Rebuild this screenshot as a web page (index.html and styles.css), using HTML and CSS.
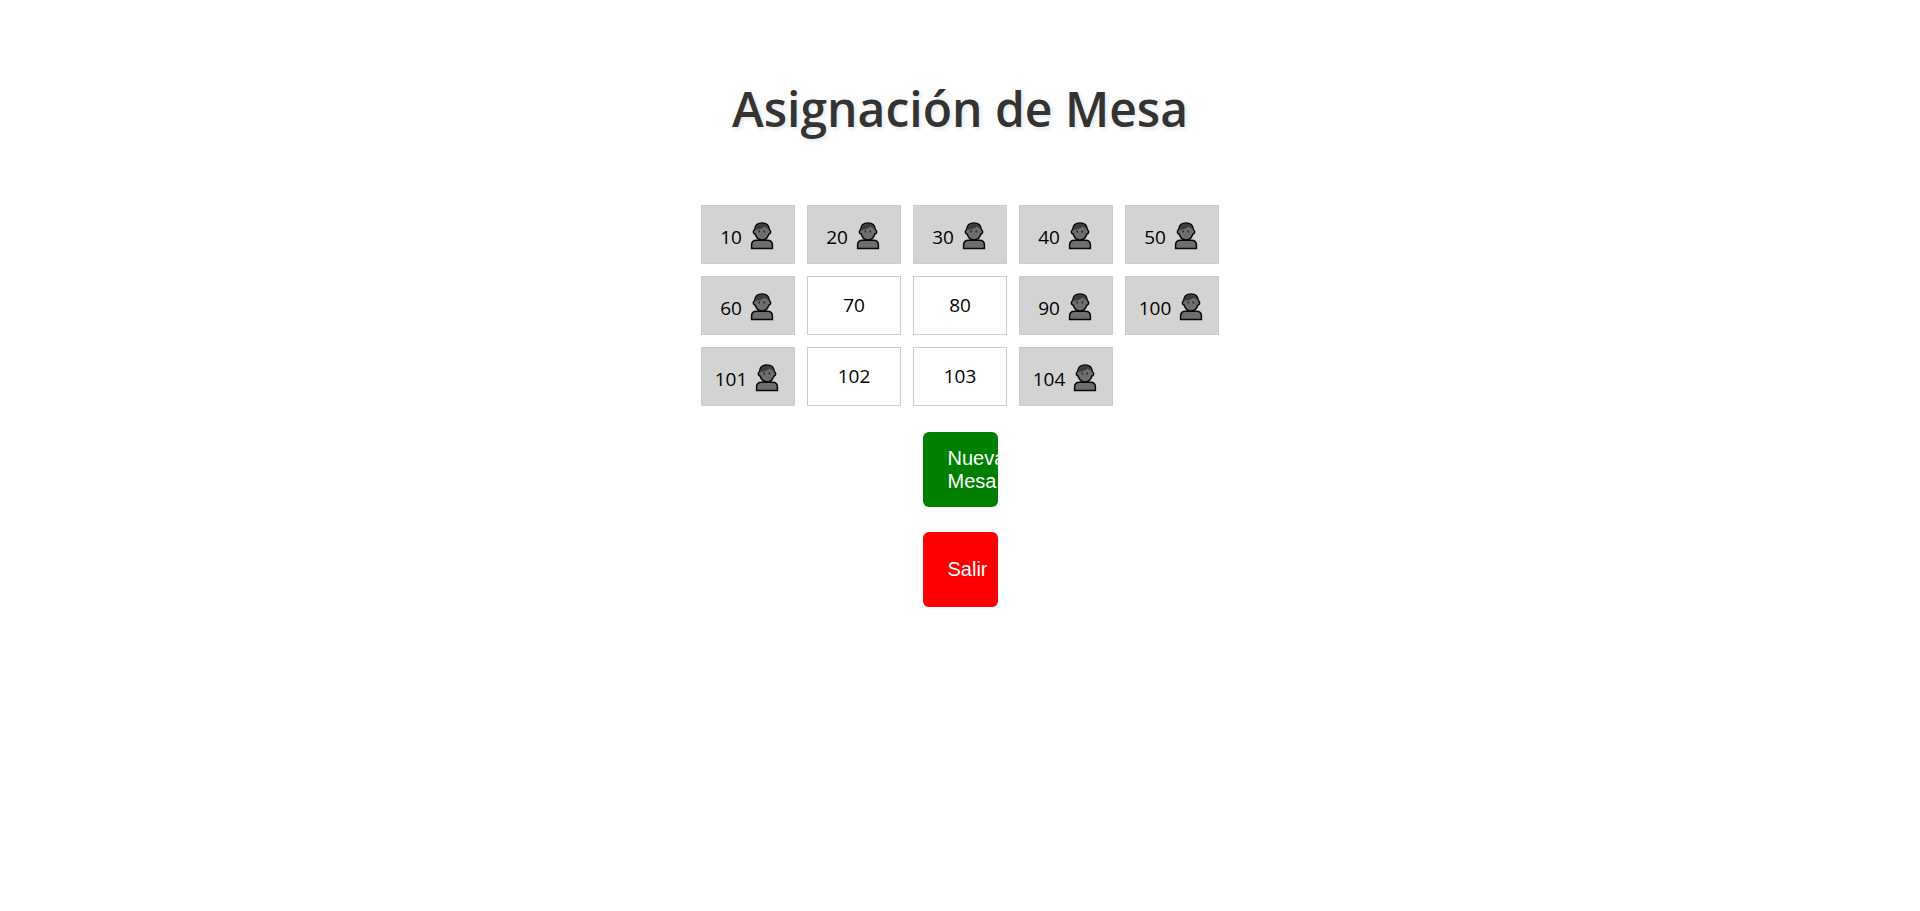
FILE: index.html
```html
<!DOCTYPE html>
<html lang="es">
<head>
<meta charset="utf-8">
<title>Asignación de Mesa</title>
<link rel="stylesheet" href="styles.css">
</head>
<body>
<svg class="sprite" aria-hidden="true">
  <symbol id="person" viewBox="0 0 30 30">
    <path d="M4.600 27.400V24Q4.600 19.200 9.500 19.200H20.500Q25.400 19.200 25.400 24V27.400Z" fill="#6e6e6e" stroke="#080808" stroke-width="1.500"/>
    <path d="M7.600 8.500C8 4.500 10.800 1.900 15 1.900C19.200 1.900 22 4.500 22.400 8.500C24.300 9.800 24 12.500 21.800 13.200C20.800 16.300 18 18.900 15 18.900C12 18.900 9.200 16.300 8.200 13.200C6 12.500 5.700 9.800 7.600 8.500Z" fill="#6e6e6e" stroke="#080808" stroke-width="1.500"/>
    <path d="M8.400 9C8.600 5 11.200 2.700 15 2.700C18.300 2.700 20.900 4.500 21.500 7.600C19.800 7.300 18.500 6.600 17.500 5.500C15.500 7.800 12 8.200 8.400 9Z" fill="#3c3c3c"/>
    <path d="M12.200 9.500V11.500M17.200 9.500V11.500" stroke="#080808" stroke-width="1"/>
  </symbol>
</svg>
<main class="page">
  <h1 class="title">Asignación de Mesa</h1>
  <div class="tables">
    <button class="table busy">10<svg class="icon"><use href="#person"/></svg></button>
    <button class="table busy">20<svg class="icon"><use href="#person"/></svg></button>
    <button class="table busy">30<svg class="icon"><use href="#person"/></svg></button>
    <button class="table busy">40<svg class="icon"><use href="#person"/></svg></button>
    <button class="table busy">50<svg class="icon"><use href="#person"/></svg></button>
    <button class="table busy">60<svg class="icon"><use href="#person"/></svg></button>
    <button class="table">70</button>
    <button class="table">80</button>
    <button class="table busy">90<svg class="icon"><use href="#person"/></svg></button>
    <button class="table busy">100<svg class="icon"><use href="#person"/></svg></button>
    <button class="table busy">101<svg class="icon"><use href="#person"/></svg></button>
    <button class="table">102</button>
    <button class="table">103</button>
    <button class="table busy">104<svg class="icon"><use href="#person"/></svg></button>
  </div>
  <div class="actions">
    <button class="action new">Nueva Mesa</button>
    <button class="action exit">Salir</button>
  </div>
</main>
</body>
</html>
```
FILE: styles.css
```css
* {
  box-sizing: border-box;
}

body {
  margin: 0;
  background: #fff;
  font-family: "Segoe UI", "Noto Sans", sans-serif;
}

.sprite {
  position: absolute;
  width: 0;
  height: 0;
}

.page {
  display: flex;
  flex-direction: column;
  align-items: center;
  padding-top: 75px;
}

.title {
  margin: 0 0 62px;
  font-family: "Segoe UI", "Open Sans", sans-serif;
  font-size: 48px;
  font-weight: 600;
  line-height: 68px;
  color: #333;
  text-shadow: 2px 2px 4px rgba(0, 0, 0, 0.1);
}

.tables {
  display: grid;
  grid-template-columns: repeat(5, 94px);
  gap: 12px;
}

.table {
  display: flex;
  align-items: center;
  justify-content: center;
  min-height: 59px;
  padding: 0 0 1px;
  border: 1px solid #ccc;
  background: #fff;
  color: #000;
  font-family: "Segoe UI", "Open Sans", sans-serif;
  font-size: 19px;
  line-height: 26px;
}

.busy {
  align-items: flex-start;
  padding: 18px 0 0 1px;
  background: #d3d3d3;
}

.icon {
  flex: none;
  width: 30px;
  height: 30px;
  margin: -3px 0 0 5px;
}

.actions {
  display: flex;
  flex-direction: column;
  gap: 25px;
  margin-top: 26px;
}

.action {
  width: 75px;
  height: 75px;
  padding: 0 25px;
  border: 0;
  border-radius: 6px;
  color: #fff;
  font-family: Arial, "Liberation Sans", sans-serif;
  font-size: 20px;
  line-height: 23px;
  text-align: left;
}

.new {
  background: #008000;
}

.exit {
  background: #f00;
}
```
